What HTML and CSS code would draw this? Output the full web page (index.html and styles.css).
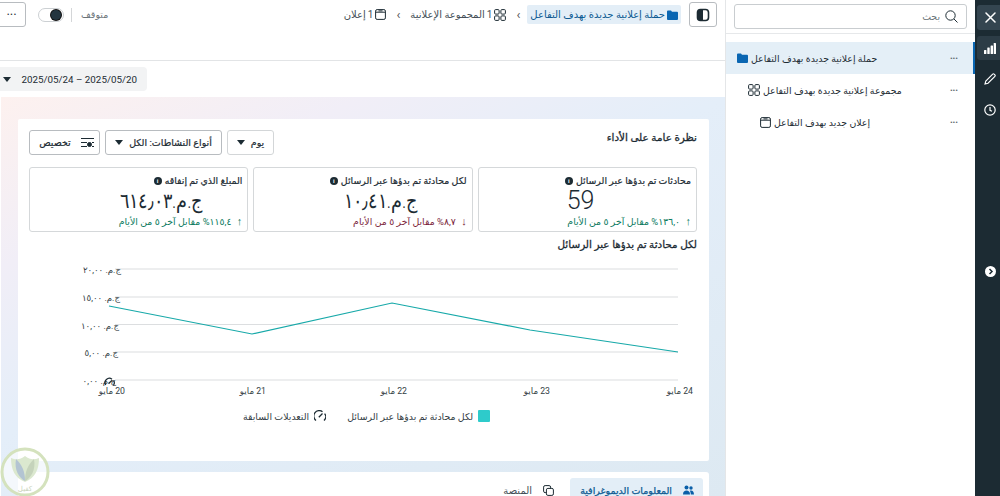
FILE: index.html
```html
<!DOCTYPE html>
<html lang="ar">
<head>
<meta charset="utf-8">
<title>نظرة عامة على الأداء</title>
<link rel="stylesheet" href="styles.css">
</head>
<body>
<div class="shell">
  <main class="main">
    <header class="topbar">
      <button class="icon-btn toggle-panel" aria-label="panel">
        <svg width="14" height="14" viewBox="0 0 14 14"><rect x="1.500" y="1.500" width="11" height="11" rx="3" fill="none" stroke="#1c2b33" stroke-width="1.600"/><path d="M1.500 4.500a3 3 0 0 1 3-3H7v11H4.500a3 3 0 0 1-3-3z" fill="#1c2b33"/></svg>
      </button>
      <nav class="crumbs">
        <span class="crumb crumb-active">
          <svg width="11" height="10" viewBox="0 0 11 10"><path d="M0 1.500a1 1 0 0 1 1-1h3l1 1.300h5a1 1 0 0 1 1 1V9a1 1 0 0 1-1 1H1a1 1 0 0 1-1-1z" fill="#0a66b2"/></svg>
          حملة إعلانية جديدة بهدف التفاعل
        </span>
        <span class="chev">&#8250;</span>
        <span class="crumb">
          <svg width="12" height="12" viewBox="0 0 12 12" class="line-icon"><rect x=".6" y=".6" width="4.500" height="4.500" rx="1"/><rect x="6.900" y=".6" width="4.500" height="4.500" rx="1"/><rect x=".6" y="6.900" width="4.500" height="4.500" rx="1"/><rect x="6.900" y="6.900" width="4.500" height="4.500" rx="1"/></svg>
          <bdi>1</bdi> المجموعة الإعلانية
        </span>
        <span class="chev">&#8250;</span>
        <span class="crumb">
          <svg width="11" height="11" viewBox="0 0 11 11" class="line-icon"><rect x=".6" y=".6" width="9.800" height="9.800" rx="1.500"/><path d="M.6 3.200h9.800M3.500 1.900h4"/></svg>
          <bdi>1</bdi> إعلان
        </span>
      </nav>
      <div class="status">
        <span class="status-label">متوقف</span>
        <span class="status-sep"></span>
        <span class="switch"><span class="knob"></span></span>
        <button class="icon-btn more-btn" aria-label="more">&#8226;&#8226;&#8226;</button>
      </div>
    </header>

    <div class="date-row">
      <button class="date-pill"><span class="caret"></span><span>2025/05/24 – 2025/05/20</span></button>
    </div>

    <section class="canvas">
      <article class="card">
        <div class="card-head">
          <h2 class="card-title">نظرة عامة على الأداء</h2>
          <div class="filters">
            <button class="filter filter-day">يوم <span class="caret"></span></button>
            <button class="filter filter-types">أنواع النشاطات: الكل <span class="caret"></span></button>
            <button class="filter filter-custom">
              <svg width="13" height="11" viewBox="0 0 13 11" class="line-icon"><path d="M0 1.500h13M6 5.500H0M0 9.500h6M11 9.500h2M11 5.500h2"/><circle cx="8.500" cy="7.500" r="2" fill="#1c2b33"/></svg>
              تخصيص
            </button>
          </div>
        </div>

        <div class="kpis">
          <div class="kpi">
            <div class="kpi-name">محادثات تم بدؤها عبر الرسائل <span class="info">i</span></div>
            <div class="kpi-value kpi-latin"><span class="kpi-num">59</span></div>
            <div class="kpi-delta up"><span class="arrow">&#8593;</span> ١٣٦,٠% مقابل آخر ٥ من الأيام</div>
          </div>
          <div class="kpi">
            <div class="kpi-name">لكل محادثة تم بدؤها عبر الرسائل <span class="info">i</span></div>
            <div class="kpi-value"><span class="kpi-num">ج.م.‏١٠٫٤١</span></div>
            <div class="kpi-delta down"><span class="arrow">&#8595;</span> ٨,٧% مقابل آخر ٥ من الأيام</div>
          </div>
          <div class="kpi">
            <div class="kpi-name">المبلغ الذي تم إنفاقه <span class="info">i</span></div>
            <div class="kpi-value"><span class="kpi-num">ج.م.‏٦١٤٫٠٣</span></div>
            <div class="kpi-delta up"><span class="arrow">&#8593;</span> ١١٥,٤% مقابل آخر ٥ من الأيام</div>
          </div>
        </div>

        <h3 class="chart-title">لكل محادثة تم بدؤها عبر الرسائل</h3>

        <svg class="chart" width="668" height="150" viewBox="29 255 668 150">
          <g class="grid">
            <line x1="115" y1="269" x2="678" y2="269"/>
            <line x1="115" y1="297" x2="678" y2="297"/>
            <line x1="115" y1="324.500" x2="678" y2="324.500"/>
            <line x1="115" y1="352" x2="678" y2="352"/>
            <line x1="115" y1="380" x2="678" y2="380"/>
          </g>
          <polyline class="series" points="109,306 252,334 392,303 530,330 678,352"/>
          <g class="axis">
            <text x="121" y="273">ج.م. ٢٠,٠٠</text>
            <text x="120" y="301">ج.م. ١٥,٠٠</text>
            <text x="119" y="329">ج.م. ١٠,٠٠</text>
            <text x="118" y="356">ج.م. ٥,٠٠</text>
            <text x="116" y="384">ج.م. ٠,٠٠</text>
            <text x="125" y="394">20 مايو</text>
            <text x="266" y="394">21 مايو</text>
            <text x="407" y="394">22 مايو</text>
            <text x="550" y="394">23 مايو</text>
            <text x="693" y="394">24 مايو</text>
          </g>
          <g class="gauge" transform="translate(105 378)">
            <path d="M.8 7A4.300 4.300 0 0 1 7 1.200M9 3a4.300 4.300 0 0 1-.5 4.500M3.500 5.500 7 2.500"/>
          </g>
        </svg>

        <div class="legend">
          <span class="legend-item"><span class="swatch"></span>لكل محادثة تم بدؤها عبر الرسائل</span>
          <span class="legend-item">
            <svg width="12" height="12" viewBox="0 0 12 12" class="gauge-icon"><path d="M2 10.500A5 5 0 0 1 8.500 1.700M10.600 3.600A5 5 0 0 1 10 10.500M4.800 7.200 8.500 3.500"/></svg>
            التعديلات السابقة
          </span>
        </div>
      </article>

      <div class="tabs">
        <button class="tab tab-active">
          <svg width="11" height="10" viewBox="0 0 11 10"><circle cx="3.500" cy="2.500" r="2" fill="#0a5fa8"/><circle cx="8" cy="3" r="1.700" fill="#0a5fa8"/><path d="M0 9.500c0-3 1.500-4 3.500-4s3.500 1 3.500 4zM7.800 9.500c0-1.500-.3-3-1-3.800C9 5 11 6 11 9.500z" fill="#0a5fa8"/></svg>
          المعلومات الديموغرافية
        </button>
        <button class="tab">
          <svg width="11" height="11" viewBox="0 0 11 11" class="line-icon"><rect x=".6" y=".6" width="7" height="7" rx="1.500"/><rect x="3.400" y="3.400" width="7" height="7" rx="1.500" fill="#fff"/></svg>
          المنصة
        </button>
      </div>
    </section>
  </main>

  <aside class="side">
    <div class="search-wrap">
      <div class="search">
        <svg width="13" height="13" viewBox="0 0 13 13" class="line-icon"><circle cx="5.500" cy="5.500" r="4.700"/><path d="m9 9 3.500 3.500"/></svg>
        <span>بحث</span>
      </div>
    </div>
    <ul class="tree">
      <li class="tree-row tree-selected">
        <span class="tree-label">
          <svg width="11" height="10" viewBox="0 0 11 10"><path d="M0 1.500a1 1 0 0 1 1-1h3l1 1.300h5a1 1 0 0 1 1 1V9a1 1 0 0 1-1 1H1a1 1 0 0 1-1-1z" fill="#0a66b2"/></svg>
          حملة إعلانية جديدة بهدف التفاعل
        </span>
        <span class="dots">&#8226;&#8226;&#8226;</span>
      </li>
      <li class="tree-row tree-level2">
        <span class="tree-label">
          <svg width="12" height="12" viewBox="0 0 12 12" class="line-icon"><rect x=".6" y=".6" width="4.500" height="4.500" rx="1"/><rect x="6.900" y=".6" width="4.500" height="4.500" rx="1"/><rect x=".6" y="6.900" width="4.500" height="4.500" rx="1"/><rect x="6.900" y="6.900" width="4.500" height="4.500" rx="1"/></svg>
          مجموعة إعلانية جديدة بهدف التفاعل
        </span>
        <span class="dots">&#8226;&#8226;&#8226;</span>
      </li>
      <li class="tree-row tree-level3">
        <span class="tree-label">
          <svg width="11" height="11" viewBox="0 0 11 11" class="line-icon"><rect x=".6" y=".6" width="9.800" height="9.800" rx="1.500"/><path d="M.6 3.200h9.800M3.500 1.900h4"/></svg>
          إعلان جديد بهدف التفاعل
        </span>
        <span class="dots">&#8226;&#8226;&#8226;</span>
      </li>
    </ul>
  </aside>

  <nav class="rail">
    <button class="rail-btn rail-close" aria-label="close">
      <svg width="11" height="11" viewBox="0 0 11 11"><path d="m1 1 9 9M10 1l-9 9" stroke="#fff" stroke-width="1.500" stroke-linecap="round"/></svg>
    </button>
    <button class="rail-btn rail-chart" aria-label="chart">
      <svg width="12" height="11" viewBox="0 0 12 11" fill="#fff"><rect x="0" y="7" width="2.400" height="4" rx=".5"/><rect x="3.300" y="4.500" width="2.400" height="6.500" rx=".5"/><rect x="6.600" y="2.500" width="2.400" height="8.500" rx=".5"/><rect x="9.700" y="0" width="2.300" height="11" rx=".5"/></svg>
    </button>
    <button class="rail-btn" aria-label="edit">
      <svg width="12" height="12" viewBox="0 0 12 12" fill="none" stroke="#fff" stroke-width="1.100"><path d="M1 11l.8-3L8.700 1.100a1 1 0 0 1 1.400 0l.8.800a1 1 0 0 1 0 1.400L4 10.200z"/></svg>
    </button>
    <button class="rail-btn" aria-label="history">
      <svg width="12" height="12" viewBox="0 0 12 12" fill="none" stroke="#fff" stroke-width="1.200"><circle cx="6" cy="6" r="5.200"/><path d="M6 3v3.300l2 1"/></svg>
    </button>
    <span class="rail-expand">
      <svg width="11" height="11" viewBox="0 0 11 11"><circle cx="5.500" cy="5.500" r="5.500" fill="#fff"/><path d="m4.500 3 2.500 2.500L4.500 8" fill="none" stroke="#1c2b33" stroke-width="1.500"/></svg>
    </span>
  </nav>
</div>

<svg class="watermark" width="52" height="52" viewBox="0 0 52 52">
  <circle cx="25" cy="26" r="23" fill="#fff" fill-opacity=".6" stroke="#d4e2bd" stroke-width="3"/>
  <path d="M11 12c5 2 9 2 14-2 5 4 9 4 14 2 0 12-4 20-14 24-10-4-14-12-14-24z" fill="#dbe8cf"/>
  <path d="M16 13c6 6 9 12 9 22-6-3-11-11-9-22z" fill="#b3c4d2"/>
  <path d="M34 13c-6 6-9 12-9 22 6-3 11-11 9-22z" fill="#c5d3bb"/>
  <text class="watermark-text" x="25" y="45" text-anchor="middle">كفيل</text>
</svg>
</body>
</html>
```
FILE: styles.css
```css
* { box-sizing: border-box; }
html, body { margin: 0; height: 100%; overflow: hidden; background: #fff; }
body {
  font-family: Roboto, "DejaVu Sans", sans-serif;
  font-size: 10px;
  color: #1c2b33;
}
button { font: inherit; color: inherit; background: none; border: 0; padding: 0; }
h2, h3, ul { margin: 0; padding: 0; list-style: none; }

.shell { display: flex; direction: ltr; height: 496px; width: 1000px; }

.main { width: 726px; flex: none; direction: rtl; border-right: 1px solid #e4e6e8; overflow: hidden; }

.topbar {
  height: 61px;
  display: flex;
  align-items: flex-start;
  padding: 2px 8px 0 0;
  border-bottom: 1px solid #e2e4e6;
}
.icon-btn {
  height: 25px;
  border: 1px solid #b8bcc0;
  border-radius: 3px;
  display: flex;
  align-items: center;
  justify-content: center;
  background: #fff;
}
.toggle-panel { width: 28px; flex: none; }
.crumbs { display: flex; align-items: center; margin: 3px 8px 0 0; color: #444f57; }
.crumb { display: flex; align-items: center; gap: 2px; height: 19px; padding: 0 3px; white-space: nowrap; }
.crumb-active { background: #e3eef7; color: #0b5a92; border-radius: 2px; }
.chev { width: 18px; text-align: center; font-size: 13px; color: #555; }

.line-icon { fill: none; stroke: #1c2b33; stroke-width: 1; flex: none; }

.status { margin: 0 auto 0 -6px; display: flex; align-items: center; height: 25px; }
.status-label { color: #6a7379; font-size: 9.500px; }
.status-sep { width: 1px; height: 14px; background: #d4d6d8; margin: 0 9px 0 7px; }
.switch { width: 26px; height: 14px; border: 1px solid #ccd0d3; border-radius: 7px; display: flex; align-items: center; padding: 0 2px; margin-left: 12px; }
.knob { width: 10px; height: 10px; border-radius: 50%; background: #24353f; box-shadow: 0 0 0 1px #111; }
.more-btn { width: 32px; padding-left: 4px; font-size: 7px; letter-spacing: 1px; }

.date-row { height: 36px; padding-top: 6px; display: flex; justify-content: flex-end; }
.date-pill {
  direction: ltr;
  height: 24px;
  width: 157px;
  margin-left: -10px;
  padding: 0 10px 0 13px;
  background: #f2f3f4;
  border-radius: 4px;
  display: flex;
  align-items: center;
  justify-content: space-between;
  font-size: 9.800px;
}
.caret { display: inline-block; width: 0; height: 0; border: 4.500px solid transparent; border-top: 5px solid #1c2b33; border-bottom: 0; flex: none; }

.canvas {
  margin-left: 1px;
  height: 399px;
  padding: 22px 16px 0 17px;
  background: linear-gradient(155deg, #fdf1ef 0%, #f1eef7 23%, #e4eef9 46%, #dde9f2 100%);
}
.card { height: 342px; background: #fff; border-radius: 2px; padding: 11px 12px 0 11px; }
.card-head { display: flex; justify-content: space-between; height: 25px; }
.card-title { font-size: 10.400px; font-weight: 400; -webkit-text-stroke: .3px #1c2b33; padding-top: 1px; }
.filters { display: flex; gap: 5px; }
.filter {
  height: 25px;
  border: 1px solid #b8bcc0;
  border-radius: 3px;
  display: flex;
  align-items: center;
  justify-content: center;
  gap: 6px;
  white-space: nowrap;
  font-size: 9.500px;
  -webkit-text-stroke: .2px #1c2b33;
}
.filter-day { width: 47px; border-color: #d3d6d8; }
.filter-types { width: 117px; }
.filter-custom { width: 71px; gap: 10px; padding-left: 4px; }

.kpis { display: grid; grid-template-columns: repeat(3, 1fr); gap: 5px; margin-top: 12px; }
.kpi { height: 65px; border: 1px solid #d5d8da; border-radius: 3px; padding: 5px 5px 0; }
.kpi-name { font-size: 9.400px; -webkit-text-stroke: .2px #1c2b33; height: 15px; display: flex; align-items: center; gap: 3px; }
.info { width: 8px; height: 8px; border-radius: 50%; background: #1c2b33; color: #fff; font: 700 6px/8px "Liberation Sans", sans-serif; text-align: center; -webkit-text-stroke: 0; }
.kpi-value { height: 26px; font-size: 21px; font-weight: 300; line-height: 26px; text-align: left; padding-left: 85px; white-space: nowrap; }
.kpi-num { display: inline-block; transform: scaleX(.84); transform-origin: left center; }
.kpi-latin { font-size: 25px; padding-left: 83px; }
.kpi-latin .kpi-num { transform: none; }
.kpi-delta { font-size: 9.400px; margin-top: 1px; }
.up { color: #0b7a5e; }
.down { color: #7c1f3c; }
.arrow { font-family: "Liberation Sans", sans-serif; font-size: 11px; margin-left: 3px; }

.chart-title { font-size: 10.400px; font-weight: 400; -webkit-text-stroke: .3px #1c2b33; margin-top: 6px; height: 17px; }
.chart { display: block; }
.grid line { stroke: #dcdee0; stroke-width: 1.200; }
.series { fill: none; stroke: #17a9a9; stroke-width: 1.200; }
.axis text { font-size: 8.700px; fill: #333d44; direction: rtl; text-anchor: start; }
.gauge path, .gauge-icon { fill: none; stroke: #1c2b33; stroke-width: 1.300; }

.legend { display: flex; gap: 21px; margin-top: 5px; padding-right: 207px; color: #333d44; font-size: 9.400px; }
.legend-item { display: flex; align-items: center; gap: 5px; white-space: nowrap; }
.swatch { width: 12px; height: 12px; border-radius: 1px; background: #2ecbcb; }

.tabs { margin-top: 11px; height: 40px; background: #fff; border-radius: 3px 3px 0 0; padding: 6px 6px 0; display: flex; gap: 16px; }
.tab { height: 24px; display: flex; align-items: center; gap: 11px; color: #444f57; white-space: nowrap; }
.tab-active { background: #e3eef7; color: #0b5a92; -webkit-text-stroke: .25px #0b5a92; border-radius: 3px; width: 133px; padding: 0 9px; font-size: 9.500px; }

.side { width: 249px; flex: none; direction: rtl; font-size: 9.400px; }
.search-wrap { height: 34px; padding: 4px 8px 0; border-bottom: 1px solid #e6e8ea; }
.search { height: 25px; border: 1px solid #c9cdd0; border-radius: 3px; display: flex; align-items: center; gap: 5px; padding: 0 8px; color: #6a7379; }
.tree { padding-top: 8px; }
.tree-row { height: 32px; display: flex; justify-content: space-between; align-items: center; padding: 0 17px 0 22px; direction: ltr; }
.tree-label { display: flex; align-items: center; gap: 3px; white-space: nowrap; direction: ltr; }
.tree-selected { background: #e4eff7; border-right: 2px solid #0a66b2; padding: 0 15px 0 11px; }
.tree-level3 { padding-left: 34px; }
.dots { font-size: 8px; letter-spacing: 0; color: #5f686e; }

.rail { width: 25px; flex: none; background: #1c2b33; padding: 5px 0 0 2px; display: flex; flex-direction: column; align-items: center; }
.rail-btn { width: 23px; height: 27px; padding-left: 3px; display: flex; align-items: center; justify-content: center; border-radius: 3px 0 0 3px; margin-bottom: 4px; flex: none; }
.rail-close { background: #344550; height: 25px; margin-bottom: 6px; }
.rail-chart { background: #2c3c46; height: 24px; margin-bottom: 5px; }
.rail-expand { margin-top: 139px; padding-left: 4px; display: flex; }

.watermark { position: absolute; left: 0; bottom: -2px; }
.watermark-text { font-size: 7px; fill: #c9d4bd; }
```
